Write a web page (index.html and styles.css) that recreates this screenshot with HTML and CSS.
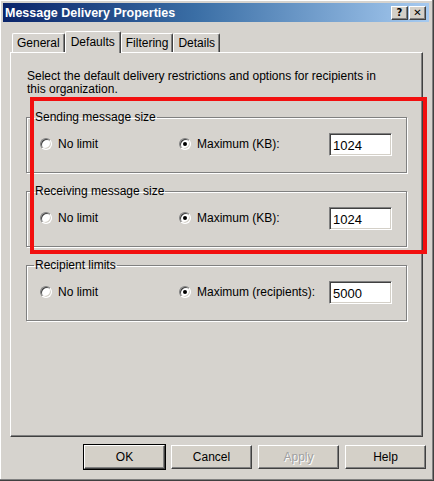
FILE: index.html
```html
<!DOCTYPE html>
<html lang="en">

<head>
    <meta charset="UTF-8">
    <title>Message Delivery Properties</title>
    <link rel="stylesheet" href="styles.css">
</head>

<body>

    <div class="window">
        <div class="title-bar">
            <span class="title">Message Delivery Properties</span>
            <div class="title-buttons">
                <button class="cap-btn">?</button>
                <button class="cap-btn">&#x2715;</button>
            </div>
        </div>

        <div class="tabs">
            <div class="tab">General</div>
            <div class="tab active">Defaults</div>
            <div class="tab">Filtering</div>
            <div class="tab">Details</div>
        </div>

        <div class="panel">
            <p class="intro">Select the default delivery restrictions and options for recipients in this organization.</p>

            <fieldset class="group">
                <legend>Sending message size</legend>
                <div class="row">
                    <label class="opt"><input type="radio" name="send"> No limit</label>
                    <label class="opt max"><input type="radio" name="send" checked> Maximum (KB):</label>
                    <input class="num" type="text" value="1024">
                </div>
            </fieldset>

            <fieldset class="group">
                <legend>Receiving message size</legend>
                <div class="row">
                    <label class="opt"><input type="radio" name="recv"> No limit</label>
                    <label class="opt max"><input type="radio" name="recv" checked> Maximum (KB):</label>
                    <input class="num" type="text" value="1024">
                </div>
            </fieldset>

            <fieldset class="group">
                <legend>Recipient limits</legend>
                <div class="row">
                    <label class="opt"><input type="radio" name="rcpt"> No limit</label>
                    <label class="opt max"><input type="radio" name="rcpt" checked> Maximum (recipients):</label>
                    <input class="num" type="text" value="5000">
                </div>
            </fieldset>

            <div class="highlight"></div>
        </div>

        <div class="actions">
            <button class="btn default">OK</button>
            <button class="btn">Cancel</button>
            <button class="btn" disabled>Apply</button>
            <button class="btn">Help</button>
        </div>
    </div>

</body>

</html>
```

FILE: styles.css
```css
body {
    margin: 0;
    background: #d4d0c8;
    font-family: 'Liberation Sans', Arial, sans-serif;
    font-size: 12px;
    color: #000;
}

.window {
    width: 434px;
    height: 481px;
    box-sizing: border-box;
    padding: 3px 4px 0 3px;
    background: #d6d3ce;
    border-right: 1px solid #404040;
    border-bottom: 1px solid #404040;
    box-shadow: inset -1px -1px #808080, inset 1px 1px #fff;
    position: relative;
}

.title-bar {
    height: 19px;
    display: flex;
    align-items: center;
    justify-content: space-between;
    padding: 0 3px 0 2px;
    background: linear-gradient(to right, #0a246a, #3a6ea5 45%, #a6caf0);
}

.title {
    color: white;
    font-weight: bold;
    font-size: 12.5px;
}

.title-buttons {
    display: flex;
    gap: 1px;
}

.cap-btn {
    width: 17px;
    height: 14px;
    padding: 0;
    font-family: 'DejaVu Sans', sans-serif;
    font-weight: bold;
    font-size: 10px;
    line-height: 12px;
    background: #d4d0c8;
    border: 1px solid;
    border-color: #fff #404040 #404040 #fff;
    box-shadow: inset -1px -1px #808080;
}

.tabs {
    display: flex;
    align-items: flex-end;
    height: 22px;
    margin-top: 8px;
    padding-left: 9px;
    position: relative;
    z-index: 1;
}

.tab {
    height: 18px;
    padding: 0 4px;
    line-height: 19px;
    border: 1px solid;
    border-color: #fff #404040 transparent #fff;
    border-bottom: none;
    border-radius: 2px 2px 0 0;
    box-shadow: inset -1px 0 #808080;
    background: #d6d3ce;
}

.tab.active {
    height: 21px;
    line-height: 20px;
    margin-bottom: -1px;
    padding: 0 5px;
}

.panel {
    margin: 0 6px 0 7px;
    height: 385px;
    box-sizing: border-box;
    padding: 17px 15px 0 16px;
    border: 1px solid;
    border-color: #fff #404040 #404040 #fff;
    box-shadow: inset -1px -1px #808080;
    position: relative;
}

.intro {
    margin: 0 0 15px 0;
    line-height: 13px;
    width: 370px;
}

.group {
    margin: 0 0 12px -1px;
    padding: 0 14px 0 13px;
    height: 62px;
    box-sizing: border-box;
    border: 1px solid #808080;
    box-shadow: 1px 1px #fff, inset 1px 1px #fff;
}

.group legend {
    padding: 0 1px;
    margin-left: -6px;
    line-height: 13px;
}

.row {
    display: flex;
    align-items: center;
    height: 28px;
    margin-top: 6px;
}

.opt {
    display: flex;
    align-items: center;
    gap: 6px;
    white-space: nowrap;
}

.opt.max {
    margin-left: 81px;
}

.opt input {
    appearance: none;
    margin: 0;
    width: 12px;
    height: 12px;
    border-radius: 50%;
    background: #fff;
    border: 1px solid;
    border-color: #808080 #fff #fff #808080;
    box-shadow: inset 1px 1px #404040, inset -1px -1px #d4d0c8;
    position: relative;
}

.opt input:checked::after {
    content: "";
    position: absolute;
    left: 3px;
    top: 3px;
    width: 4px;
    height: 4px;
    border-radius: 50%;
    background: #000;
}

.num {
    margin-left: auto;
    width: 63px;
    height: 23px;
    box-sizing: border-box;
    padding: 2px 3px 0;
    font-family: inherit;
    font-size: 13px;
    border: 1px solid;
    border-color: #808080 #fff #fff #808080;
    box-shadow: inset 1px 1px #404040, inset -1px -1px #d4d0c8;
}

.highlight {
    position: absolute;
    left: 19px;
    top: 44px;
    width: 389px;
    height: 149px;
    border: 4px solid #f20f0f;
}

.actions {
    display: flex;
    justify-content: flex-end;
    gap: 6px;
    margin-top: 8px;
    padding-right: 3px;
}

.btn {
    width: 81px;
    height: 24px;
    font-family: inherit;
    font-size: 12px;
    background: #d4d0c8;
    border: 1px solid;
    border-color: #fff #404040 #404040 #fff;
    box-shadow: inset -1px -1px #808080;
    padding: 0;
}

.btn.default {
    outline: 1px solid #000;
}

.btn:disabled {
    color: #a0a0a0;
    text-shadow: 1px 1px #fff;
}
```
